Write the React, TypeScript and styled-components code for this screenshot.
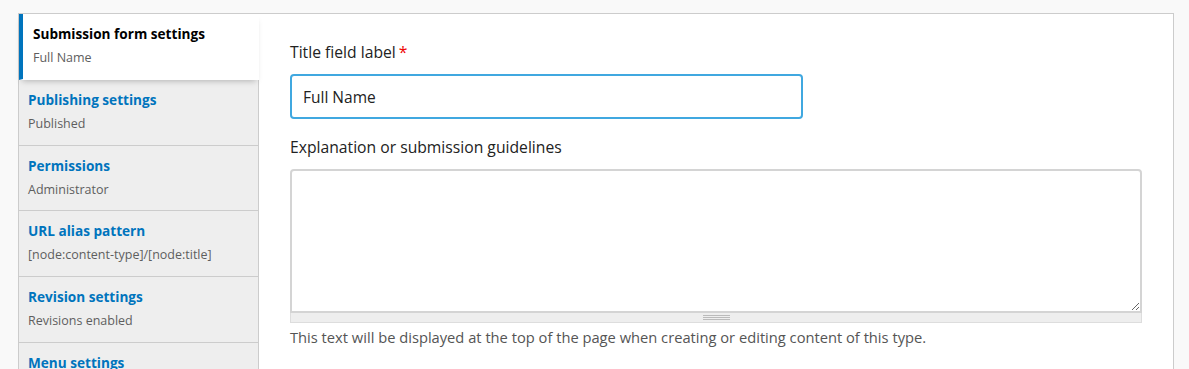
import React from "react";
import styled, { createGlobalStyle } from "styled-components";

const Global = createGlobalStyle`
  html, body { margin: 0; padding: 0; background: #f9f9f9; }
  body { font-family: "Open Sans", "DejaVu Sans", sans-serif; color: #222; }
  * { box-sizing: border-box; }
`;

const Page = styled.div`
  padding: 13px 15px 0 18px;
  height: 369px;
  overflow: hidden;
`;

const Panel = styled.div`
  display: flex;
  background: #fff;
  border: 1px solid #ccc;
  border-bottom: none;
  min-height: 400px;
`;

const TabList = styled.ul`
  list-style: none;
  margin: 0;
  padding: 0;
  width: 240px;
  flex: none;
  background: #eee;
  border-right: 1px solid #ccc;
`;

const Tab = styled.li<{ $active?: boolean }>`
  position: relative;
  padding: 10px 10px 10.75px ${(p) => (p.$active ? "10px" : "9px")};
  border-bottom: 1px solid #ccc;
  background: ${(p) => (p.$active ? "#fff" : "#eee")};
  border-left: ${(p) => (p.$active ? "4px solid #0074bd" : "none")};
  margin-right: ${(p) => (p.$active ? "-1px" : "0")};
  ${(p) =>
    p.$active &&
    `
    border-bottom-color: transparent;
    box-shadow: 0 4px 6px -3px rgba(0,0,0,0.25);
    z-index: 1;
  `}
`;

const TabTitle = styled.div<{ $active?: boolean }>`
  font-size: 13.6px;
  font-weight: 700;
  line-height: 20px;
  color: ${(p) => (p.$active ? "#000" : "#0074bd")};
  margin-bottom: 4px;
`;

const TabSummary = styled.div`
  font-size: 12.5px;
  line-height: 20px;
  color: #5e5e5e;
`;

const Content = styled.div`
  flex: 1;
  padding: 28px 31px 0 31px;
`;

const Field = styled.div`
  margin-bottom: 18px;
`;

const Label = styled.label`
  display: block;
  font-size: 15.7px;
  line-height: 20px;
  color: #222;
  margin-bottom: 12px;
`;

const Required = styled.span`
  color: #e00;
  margin-left: 3px;
`;

const TextInput = styled.input`
  display: block;
  width: 513px;
  height: 45px;
  padding: 0 11px;
  border: 2px solid #40a8e0;
  border-radius: 4px;
  font-family: inherit;
  font-size: 15.5px;
  color: #222;
  outline: none;
`;

const TextArea = styled.textarea`
  display: block;
  width: 100%;
  height: 144px;
  margin: 0;
  border: 2px solid #d4d4d4;
  border-radius: 4px 4px 0 0;
  font-family: inherit;
  font-size: 15px;
  resize: vertical;
  outline: none;
`;

const Grippie = styled.div`
  height: 10px;
  background: #eee;
  border: 1px solid #ddd;
  border-top: none;
  display: flex;
  align-items: center;
  justify-content: center;
`;

const GripLines = styled.div`
  width: 27px;
  height: 5px;
  border-top: 1px solid #bbb;
  border-bottom: 1px solid #bbb;
  position: relative;
  &::after {
    content: "";
    position: absolute;
    left: 0;
    right: 0;
    top: 1px;
    border-top: 1px solid #bbb;
  }
`;

const Description = styled.div`
  font-size: 14.7px;
  line-height: 20px;
  color: #555;
  margin-top: 4px;
`;

const tabs = [
  { title: "Submission form settings", summary: "Full Name", active: true },
  { title: "Publishing settings", summary: "Published" },
  { title: "Permissions", summary: "Administrator" },
  { title: "URL alias pattern", summary: "[node:content-type]/[node:title]" },
  { title: "Revision settings", summary: "Revisions enabled" },
  { title: "Menu settings", summary: "Main navigation" },
];

export default function App() {
  return (
    <Page>
      <Global />
      <Panel>
        <TabList>
          {tabs.map((t) => (
            <Tab key={t.title} $active={t.active}>
              <TabTitle $active={t.active}>{t.title}</TabTitle>
              <TabSummary>{t.summary}</TabSummary>
            </Tab>
          ))}
        </TabList>
        <Content>
          <Field>
            <Label>
              Title field label<Required>*</Required>
            </Label>
            <TextInput defaultValue="Full Name" />
          </Field>
          <Field>
            <Label>Explanation or submission guidelines</Label>
            <TextArea />
            <Grippie>
              <GripLines />
            </Grippie>
            <Description>
              This text will be displayed at the top of the page when creating or editing content of this type.
            </Description>
          </Field>
        </Content>
      </Panel>
    </Page>
  );
}
